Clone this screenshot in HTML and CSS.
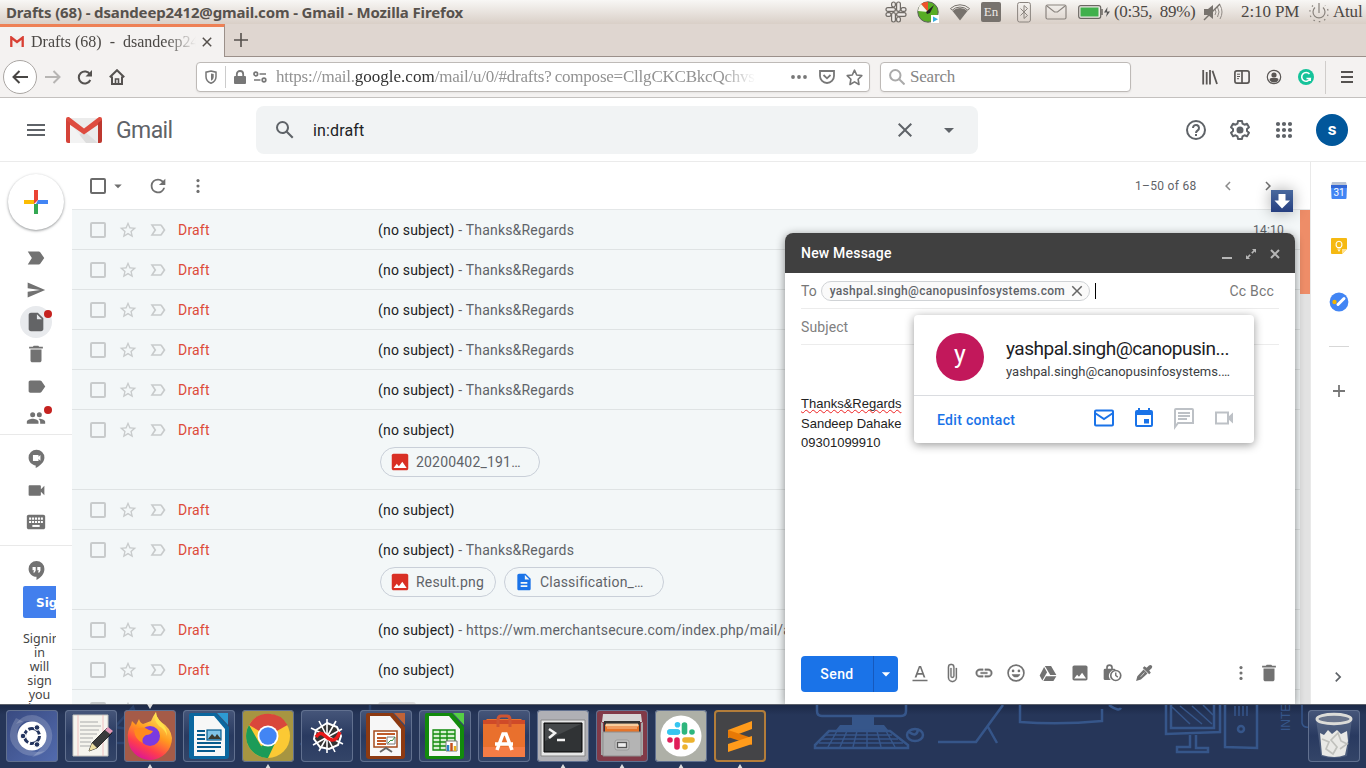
FILE: index.html
```html
<!DOCTYPE html>
<html lang="en">
<head>
<meta charset="utf-8">
<title>Drafts (68) - dsandeep2412@gmail.com - Gmail</title>
<link rel="stylesheet" href="styles.css">
</head>
<body>
<svg class="defs" width="0" height="0" aria-hidden="true">
  <symbol id="menu" viewBox="0 0 24 24"><path d="M3 18h18v-2H3v2zm0-5h18v-2H3v2zm0-7v2h18V6H3z"/></symbol>
  <symbol id="search" viewBox="0 0 24 24"><path d="M20.49 19l-5.73-5.73C15.53 12.2 16 10.91 16 9.5A6.5 6.5 0 1 0 9.5 16c1.41 0 2.7-.47 3.77-1.24L19 20.49 20.49 19zM5 9.5C5 7.01 7.01 5 9.5 5S14 7.01 14 9.5 11.99 14 9.5 14 5 11.99 5 9.5z"/></symbol>
  <symbol id="close" viewBox="0 0 24 24"><path d="M19 6.41L17.59 5 12 10.59 6.41 5 5 6.41 10.59 12 5 17.59 6.41 19 12 13.41 17.59 19 19 17.59 13.41 12z"/></symbol>
  <symbol id="caret" viewBox="0 0 24 24"><path d="M7 10l5 5 5-5z"/></symbol>
  <symbol id="refresh" viewBox="0 0 24 24"><path d="M17.65 6.35A7.96 7.96 0 0 0 12 4a8 8 0 1 0 7.73 10h-2.08A6 6 0 1 1 12 6c1.66 0 3.14.69 4.22 1.78L13 11h7V4l-2.35 2.35z"/></symbol>
  <symbol id="more" viewBox="0 0 24 24"><circle cx="12" cy="5.500" r="1.900"/><circle cx="12" cy="12" r="1.900"/><circle cx="12" cy="18.500" r="1.900"/></symbol>
  <symbol id="left" viewBox="0 0 24 24"><path d="M15.41 7.41L14 6l-6 6 6 6 1.41-1.41L10.83 12z"/></symbol>
  <symbol id="right" viewBox="0 0 24 24"><path d="M10 6L8.590 7.410 13.170 12l-4.580 4.590L10 18l6-6z"/></symbol>
  <symbol id="star" viewBox="0 0 24 24"><path d="M22 9.24l-7.19-.62L12 2 9.19 8.63 2 9.24l5.46 4.73L5.820 21 12 17.270 18.180 21l-1.630-7.030L22 9.240zM12 15.400l-3.760 2.270 1-4.280-3.320-2.880 4.380-.38L12 6.100l1.710 4.040 4.380.38-3.320 2.880 1 4.280L12 15.400z"/></symbol>
  <symbol id="imp-o" viewBox="0 0 24 24"><path d="M15 19H3l4.500-7L3 5h12c.65 0 1.260.31 1.630.84L21 12l-4.370 6.160c-.37.52-.98.84-1.630.84zm-8.500-2H15l3.500-5L15 7H6.500l3.500 5-3.500 5z"/></symbol>
  <symbol id="imp" viewBox="0 0 24 24"><path d="M3 19h12c.65 0 1.260-.31 1.630-.84L21 12l-4.370-6.160A2 2 0 0 0 15 5H3l4.500 7z"/></symbol>
  <symbol id="send" viewBox="0 0 24 24"><path d="M2.010 21L23 12 2.010 3 2 10l15 2-15 2z"/></symbol>
  <symbol id="draft" viewBox="0 0 24 24"><path d="M6 2c-1.100 0-2 .9-2 2v16c0 1.100.9 2 2 2h12c1.100 0 2-.9 2-2V8l-6-6H6zm7 7V3.500L18.500 9H13z"/></symbol>
  <symbol id="trash" viewBox="0 0 24 24"><path d="M6 19c0 1.100.9 2 2 2h8c1.100 0 2-.9 2-2V7H6v12zM19.500 4h-4l-1-1h-5l-1 1h-4v2h15V4z"/></symbol>
  <symbol id="label" viewBox="0 0 24 24"><path d="M17.630 5.840C17.270 5.330 16.670 5 16 5H5c-1.100 0-2 .9-2 2v10c0 1.100.9 2 2 2h11c.67 0 1.270-.33 1.630-.84L22 12l-4.370-6.160z"/></symbol>
  <symbol id="people" viewBox="0 0 24 24"><path d="M16 11a3 3 0 1 0 0-6 3 3 0 0 0 0 6zm-8 0a3 3 0 1 0 0-6 3 3 0 0 0 0 6zm0 2c-2.330 0-7 1.170-7 3.500V19h14v-2.500c0-2.330-4.670-3.500-7-3.500zm8 0c-.29 0-.62.02-.97.05 1.160.84 1.970 1.970 1.970 3.450V19h6v-2.500c0-2.330-4.670-3.500-7-3.500z"/></symbol>
  <symbol id="video" viewBox="0 0 24 24"><path d="M17 10.500V7c0-.55-.45-1-1-1H4c-.55 0-1 .45-1 1v10c0 .55.45 1 1 1h12c.55 0 1-.45 1-1v-3.500l4 4v-11l-4 4z"/></symbol>
  <symbol id="keyboard" viewBox="0 0 24 24"><path d="M20 4H4c-1.100 0-2 .9-2 2v12c0 1.100.9 2 2 2h16c1.100 0 2-.9 2-2V6c0-1.100-.9-2-2-2z"/><path d="M4.500 8.300h15M4.500 12h15" fill="none" stroke="#fff" stroke-width="2.300" stroke-dasharray="2.250 .95"/><path d="M8 16.300h8" stroke="#fff" stroke-width="2.200"/></symbol>
  <symbol id="meet" viewBox="0 0 24 24"><path d="M12 1a10 10 0 0 0-10 10c0 5 4 9 9 9.800V24c5-2.500 11-7.500 11-13A10 10 0 0 0 12 1z"/><path fill="#fff" d="M7.500 7.500h7v2.300L17 7.600v7.300l-2.500-2.200V15h-7z"/></symbol>
  <symbol id="hangouts" viewBox="0 0 24 24"><path d="M12 0a10 10 0 0 0-10 10c0 5.300 4.500 9.800 10 10v4c5.500-3 10-8 10-14A10 10 0 0 0 12 0z"/><path fill="#fff" d="M7 7.500h4V12l-1.300 2.500H7.800L9 11.600H7zm6 0h4V12l-1.300 2.500h-1.900l1.200-2.900h-2z"/></symbol>
  <symbol id="image" viewBox="0 0 24 24"><path d="M21 19V5c0-1.100-.9-2-2-2H5c-1.100 0-2 .9-2 2v14c0 1.100.9 2 2 2h14c1.100 0 2-.9 2-2z"/><path fill="#fff" d="M5 18.500l3.500-4.500 2.300 2.600 3.700-5 4.800 6.900z"/></symbol>
  <symbol id="doc" viewBox="0 0 24 24"><path d="M14 2H6c-1.100 0-2 .9-2 2v16c0 1.100.9 2 2 2h12c1.100 0 2-.9 2-2V8l-6-6zm2 16H8v-2h8v2zm0-4H8v-2h8v2zm-3-5V3.500L18.500 9H13z"/></symbol>
  <symbol id="expand" viewBox="0 0 12 12"><path d="M7 1h4v4L9.600 3.600 7.400 5.800l-1.200-1.200 2.200-2.200zM5 11H1V7l1.400 1.400 2.200-2.200 1.200 1.200-2.200 2.200z"/></symbol>
</svg>

<header class="titlebar">
  <span class="window-title">Drafts (68) - dsandeep2412@gmail.com - Gmail - Mozilla Firefox</span>
  <div class="tray">
    <svg class="t-slack" width="22" height="22" viewBox="0 0 22 22" fill="#efebe8" stroke="#6f6a65" stroke-width="1.200"><rect x="6.600" y="1" width="3.800" height="5" rx="1.900"/><rect x="1" y="6.600" width="9.400" height="3.800" rx="1.900"/><rect x="16" y="6.600" width="5" height="3.800" rx="1.900"/><rect x="11.600" y="1" width="3.800" height="9.400" rx="1.900"/><rect x="11.600" y="16" width="3.800" height="5" rx="1.900"/><rect x="11.600" y="11.600" width="9.400" height="3.800" rx="1.900"/><rect x="1" y="11.600" width="5" height="3.800" rx="1.900"/><rect x="6.600" y="11.600" width="3.800" height="9.400" rx="1.900"/></svg>
    <svg width="22" height="22" viewBox="0 0 22 22"><circle cx="11" cy="11" r="10.200" fill="#58ad25" stroke="#5a5f5a"/><path d="M11 11L4 3a10 10 0 0 1 7-2z" fill="#f0522a"/><path d="M11 11L4 3a10 10 0 0 0-3 7z" fill="#f6f3e8"/><path d="M17 4l-4 8-3 1-1-2z" fill="#222"/><path d="M14 14h8v8h-8z" fill="#fff"/><path d="M16 15.500l5 2.800-5 2.700z" fill="#39aee0"/></svg>
    <svg width="22" height="18" viewBox="0 0 22 18"><path d="M1.500 5.500a14 14 0 0 1 19 0L19 7.300a11.500 11.500 0 0 0-16 0z" fill="none" stroke="#77726d"/><path d="M3.500 8a11 11 0 0 1 15 0L11 17.500z" fill="#77726d"/></svg>
    <span class="lang">En</span>
    <svg width="14" height="22" viewBox="0 0 14 22" fill="none" stroke="#8a847f"><rect x=".6" y="1.500" width="12.800" height="19.500" rx="2"/><path d="M3.500 7.500l7 7L7 17.500v-13l3.500 3-7 7"/></svg>
    <svg width="22" height="16" viewBox="0 0 22 16" fill="none" stroke="#8a847f" stroke-width="1.200"><rect x="1" y="1" width="20" height="14" rx="1.500"/><path d="M2 2l7.500 6h3L20 2"/></svg>
    <svg width="33" height="14" viewBox="0 0 33 14"><rect x=".7" y=".7" width="22" height="12.600" rx="2" fill="#efebe7" stroke="#6b6762" stroke-width="1.200"/><rect x="2.500" y="2.500" width="18" height="9" fill="#40b04c"/><path d="M24 4v6" stroke="#6b6762" stroke-width="1.500"/><path d="M29.500 2L26 7.500h3L28 12l4-5.500h-3z" fill="#555"/></svg>
    <span class="battery">(0:35, &nbsp;89%)</span>
    <svg width="22" height="20" viewBox="0 0 22 20"><path d="M2 7h4l5-4v14l-5-4H2z" fill="#77726d"/><path d="M13 7q2 3 0 6M15.500 5q3 5 0 10M18 3q4 7 0 14" fill="none" stroke="#918b86"/><path d="M2 18L18 2" stroke="#77726d" stroke-width="1.500"/></svg>
    <span class="clock">2:10 PM</span>
    <svg width="20" height="22" viewBox="0 0 20 22" fill="none" stroke="#89837d" stroke-width="1.200"><path d="M10 2v10M6 6.500a6 6 0 1 0 8 0"/><path stroke-dasharray="1.500 4" d="M4 4.500a9.200 9.200 0 1 0 12 0"/></svg>
    <span class="user">Atul</span>
  </div>
</header>

<div class="tabs">
  <div class="tab">
    <svg width="14" height="11" viewBox="0 0 14 11"><path d="M0 0h14v11H0z" fill="#f2efed"/><path d="M1.300 11V1.500L7 6l5.700-4.500V11" fill="none" stroke="#d93f33" stroke-width="2.300"/></svg>
    <span class="tab-title">Drafts (68) &nbsp;- &nbsp;dsandeep24</span>
    <svg class="tab-close" width="10" height="10" viewBox="0 0 10 10" stroke="#55504c" stroke-width="1.500"><path d="M.8.8l8.400 8.400M9.200.8L.8 9.200"/></svg>
  </div>
  <svg class="new-tab" width="14" height="14" viewBox="0 0 14 14" stroke="#55504c" stroke-width="1.600"><path d="M7 0v14M0 7h14"/></svg>
</div>

<nav class="navbar">
  <span class="back"><svg width="16" height="14" viewBox="0 0 16 14" fill="none" stroke="#484644" stroke-width="2"><path d="M16 7H1.500M7.500 1l-6 6 6 6"/></svg></span>
  <svg class="fwd" width="16" height="14" viewBox="0 0 16 14" fill="none" stroke="#b7b5b3" stroke-width="2"><path d="M0 7h14.500M8.500 1l6 6-6 6"/></svg>
  <svg class="reload" width="16" height="15" viewBox="0 0 16 15"><path d="M13 4.500A6 6 0 1 0 13.300 10" fill="none" stroke="#555250" stroke-width="2"/><path d="M15 0v6.500H8.500z" fill="#555250"/></svg>
  <svg class="home" width="16" height="16" viewBox="0 0 16 16" fill="none" stroke="#555250" stroke-width="2"><path d="M.8 8.300L8 1.200l7.200 7.100M3 7.500V15h10V7.500"/><path d="M6.500 15v-5h3v5" stroke-width="1.600"/></svg>
  <div class="urlbar">
    <svg class="shield" width="12" height="14" viewBox="0 0 12 14"><path d="M6 1l5 1.200v4.500C11 10 9 12 6 13.200 3 12 1 10 1 6.700V2.200z" fill="none" stroke="#777" stroke-width="1.500"/><path d="M6 3.500l2.700.6v2.700c0 2-1 3.200-2.700 4z" fill="#777"/></svg>
    <i class="sep"></i>
    <svg width="12" height="14" viewBox="0 0 12 14"><rect y="6" width="12" height="8" rx="1" fill="#777"/><path d="M2.800 7V4.200a3.200 3.200 0 0 1 6.400 0V7" fill="none" stroke="#777" stroke-width="1.800"/></svg>
    <svg class="perm" width="14" height="12" viewBox="0 0 14 12" fill="none" stroke="#777" stroke-width="1.700"><circle cx="2.800" cy="3" r="1.800"/><path d="M6.500 3H13M1 9h6.500"/><circle cx="11" cy="9" r="1.800"/></svg>
    <span class="url">https://mail.<b>google.com</b>/mail/u/0/#drafts?&thinsp;compose=CllgCKCBkcQchvsk</span>
    <svg class="dots" width="16" height="4" viewBox="0 0 16 4" fill="#777"><circle cx="2" cy="2" r="1.900"/><circle cx="8" cy="2" r="1.900"/><circle cx="14" cy="2" r="1.900"/></svg>
    <svg class="pocket" width="16" height="14" viewBox="0 0 16 14" fill="none" stroke="#777" stroke-width="1.800"><path d="M1 1h14v5a7 7 0 0 1-14 0zM4.500 5L8 8.300 11.500 5"/></svg>
    <svg class="fav" width="17" height="17" viewBox="0 0 17 17" fill="none" stroke="#777" stroke-width="1.600" stroke-linejoin="round"><path d="M8.500 1.200l2.200 4.800 5.100.6-3.700 3.600.9 5.300-4.500-2.600L4 15.500l.9-5.300L1.200 6.600 6.300 6z"/></svg>
  </div>
  <div class="searchbar">
    <svg width="16" height="16" viewBox="0 0 16 16" fill="none" stroke="#aaa" stroke-width="2"><circle cx="6.300" cy="6.300" r="5.200"/><path d="M10 10l5.500 5.500"/></svg>
    <span>Search</span>
  </div>
  <div class="nav-tools">
    <svg width="16" height="15" viewBox="0 0 16 15" stroke="#5a5755" stroke-width="1.800"><path d="M1.200 0v14.500M4.700 2v12.500M8 0v14.500M10.500.8L15 14"/></svg>
    <svg width="16" height="14" viewBox="0 0 16 14" fill="none" stroke="#5a5755" stroke-width="1.700"><rect x=".9" y=".9" width="14.200" height="12.200" rx="2"/><path d="M8 1v12"/><path d="M3 4.200h3M3 6.500h3M3 8.700h2" stroke-width="1"/></svg>
    <svg width="16" height="16" viewBox="0 0 16 16"><circle cx="8" cy="8" r="6.700" fill="none" stroke="#5a5755" stroke-width="1.200"/><circle cx="8" cy="6" r="2.600" fill="#5a5755"/><path d="M3.500 11q0-2 2-2h5q2 0 2 2-1.500 2.500-4.500 2.500T3.500 11z" fill="#5a5755"/></svg>
    <svg width="16" height="16" viewBox="0 0 16 16"><circle cx="8" cy="8" r="8" fill="#15c39a"/><path d="M11.500 5A4.400 4.400 0 1 0 12.200 9.500H8.500M12.200 9.500V12" fill="none" stroke="#fff" stroke-width="1.600"/></svg>
  </div>
  <svg class="burger" width="12" height="12" viewBox="0 0 12 12" stroke="#555250" stroke-width="1.800"><path d="M0 1h12M0 6h12M0 11h12"/></svg>
</nav>

<div class="app">
  <header class="gm-head">
    <svg class="ic g-menu" width="24" height="24"><use href="#menu"/></svg>
    <svg class="g-logo" width="36" height="26" viewBox="0 0 36 26"><path d="M2 1h32v25H2z" fill="#ececec"/><path d="M4 26L18 14l14 12z" fill="#dedede"/><path d="M4 26V6l16 20z" fill="#f3f3f3"/><path d="M0 2a2 2 0 0 1 2-2h1l15 11.500L33 0h1a2 2 0 0 1 2 2v3L18 17.500 0 5z" fill="#de4c40"/><path d="M0 3l4 3v20H2a2 2 0 0 1-2-2z" fill="#d54339"/><path d="M36 3l-4 3v20h2a2 2 0 0 0 2-2z" fill="#bd382f"/></svg>
    <span class="g-name">Gmail</span>
    <div class="g-search">
      <svg class="ic" width="24" height="24"><use href="#search"/></svg>
      <span class="q">in:draft</span>
      <svg class="ic" width="24" height="24"><use href="#close"/></svg>
      <svg class="ic q-caret" width="24" height="24"><use href="#caret"/></svg>
    </div>
    <div class="g-right">
      <svg width="24" height="24" viewBox="0 0 24 24" fill="none" stroke="#5f6368" stroke-width="2"><circle cx="12" cy="12" r="9"/><path d="M9 10a3 3 0 1 1 4.700 2.400C12.700 13.100 12 13.600 12 15M12 16v2"/></svg>
      <svg width="24" height="24" viewBox="0 0 24 24" fill="none" stroke="#5f6368" stroke-width="2" stroke-linejoin="round"><path d="M10 3h4l.5 2.600 2 1.100 2.500-.9 2 3.400-2 1.700v2.200l2 1.700-2 3.400-2.500-.9-2 1.100L14 21h-4l-.5-2.600-2-1.100-2.500.9-2-3.400 2-1.700v-2.200L3 9.200l2-3.400 2.500.9 2-1.100z"/><circle cx="12" cy="12" r="2.500" fill="#5f6368"/></svg>
      <svg width="24" height="24" viewBox="0 0 24 24" fill="none" stroke="#5f6368" stroke-width="4.200" stroke-linecap="round"><path d="M6 6h0M12 6h0M18 6h0M6 12h0M12 12h0M18 12h0M6 18h0M12 18h0M18 18h0"/></svg>
      <span class="avatar">s</span>
    </div>
  </header>

  <div class="gm-body">
    <aside class="rail">
      <div class="compose-btn"><svg width="24" height="24" viewBox="0 0 24 24"><path d="M10 0h4v10l-4 4z" fill="#ea4335"/><path d="M0 10h10v4H0z" fill="#fbbc04"/><path d="M14 10h10v4H12z" fill="#4285f4"/><path d="M10 14h4v10h-4z" fill="#34a853"/></svg></div>
      <div class="r-item"><svg width="22" height="22"><use href="#imp"/></svg></div>
      <div class="r-item"><svg width="20" height="20"><use href="#send"/></svg></div>
      <div class="r-item on"><svg width="22" height="22"><use href="#draft"/></svg><i class="dot"></i></div>
      <div class="r-item"><svg width="22" height="22"><use href="#trash"/></svg></div>
      <div class="r-item r-label"><svg width="21" height="21"><use href="#label"/></svg></div>
      <div class="r-item"><svg width="20" height="20"><use href="#people"/></svg><i class="dot"></i></div>
      <div class="r-item r-top"><svg width="19" height="19"><use href="#meet"/></svg></div>
      <div class="r-item"><svg width="21" height="21"><use href="#video"/></svg></div>
      <div class="r-item"><svg width="22" height="22"><use href="#keyboard"/></svg></div>
      <div class="r-item r-hang"><svg width="19" height="19"><use href="#hangouts"/></svg></div>
      <div class="signin"><div class="sig-btn">Sign in</div><p>Signing in will sign you into</p></div>
    </aside>

    <main class="mail">
      <div class="m-bar">
        <i class="box dark"></i>
        <svg class="b-caret" width="18" height="18"><use href="#caret"/></svg>
        <svg class="b-ref" width="22" height="22"><use href="#refresh"/></svg>
        <svg class="b-more" width="20" height="20"><use href="#more"/></svg>
        <span class="count">1–50 of 68</span>
        <svg class="b-left" width="18" height="18"><use href="#left"/></svg>
        <svg class="b-right" width="18" height="18"><use href="#right"/></svg>
      </div>
      <div class="rows">
        <div class="list">
          <div class="row"><i class="box"></i><svg><use href="#star"/></svg><svg><use href="#imp-o"/></svg><span class="from">Draft</span><span class="subj">(no subject) <em>- Thanks&amp;Regards</em></span><time>14:10</time></div>
          <div class="row"><i class="box"></i><svg><use href="#star"/></svg><svg><use href="#imp-o"/></svg><span class="from">Draft</span><span class="subj">(no subject) <em>- Thanks&amp;Regards</em></span></div>
          <div class="row"><i class="box"></i><svg><use href="#star"/></svg><svg><use href="#imp-o"/></svg><span class="from">Draft</span><span class="subj">(no subject) <em>- Thanks&amp;Regards</em></span></div>
          <div class="row"><i class="box"></i><svg><use href="#star"/></svg><svg><use href="#imp-o"/></svg><span class="from">Draft</span><span class="subj">(no subject) <em>- Thanks&amp;Regards</em></span></div>
          <div class="row"><i class="box"></i><svg><use href="#star"/></svg><svg><use href="#imp-o"/></svg><span class="from">Draft</span><span class="subj">(no subject) <em>- Thanks&amp;Regards</em></span></div>
          <div class="row tall"><i class="box"></i><svg><use href="#star"/></svg><svg><use href="#imp-o"/></svg><span class="from">Draft</span><div class="subj">(no subject)
            <div class="files"><span class="chip w160"><svg class="f-img"><use href="#image"/></svg>20200402_191…</span></div></div></div>
          <div class="row"><i class="box"></i><svg><use href="#star"/></svg><svg><use href="#imp-o"/></svg><span class="from">Draft</span><span class="subj">(no subject)</span></div>
          <div class="row tall"><i class="box"></i><svg><use href="#star"/></svg><svg><use href="#imp-o"/></svg><span class="from">Draft</span><div class="subj">(no subject) <em>- Thanks&amp;Regards</em>
            <div class="files"><span class="chip w116"><svg class="f-img"><use href="#image"/></svg>Result.png</span><span class="chip w160"><svg class="f-doc"><use href="#doc"/></svg>Classification_…</span></div></div></div>
          <div class="row"><i class="box"></i><svg><use href="#star"/></svg><svg><use href="#imp-o"/></svg><span class="from">Draft</span><span class="subj">(no subject) <em>- https://wm.merchantsecure.com/index.php/mail/a</em></span></div>
          <div class="row"><i class="box"></i><svg><use href="#star"/></svg><svg><use href="#imp-o"/></svg><span class="from">Draft</span><span class="subj">(no subject)</span></div>
          <div class="row"><i class="box"></i><svg><use href="#star"/></svg><svg><use href="#imp-o"/></svg><i class="tag"></i></div>
        </div>
        <div class="scroll"><i></i></div>
      </div>
    </main>

    <aside class="panel">
      <svg class="p-cal" width="16" height="17" viewBox="0 0 16 17"><path d="M1 0h14l1 4H0z" fill="#b9c3d3"/><path d="M0 3h16l-.5 13q0 1-1 1h-13q-1 0-1-1z" fill="#4285f4"/><path d="M0 3h16v3H0z" fill="#3367d6"/><text x="8" y="13.500" text-anchor="middle" class="cal-num">31</text></svg>
      <svg class="p-keep" width="16" height="16" viewBox="0 0 16 16"><path d="M1 0h14q1 0 1 1v10l-5 5H1q-1 0-1-1V1q0-1 1-1z" fill="#f5b912"/><path d="M11 16v-5h5z" fill="#fde293"/><path d="M6.300 9.500C4 7 5 3.200 8 3.200s4 3.800 1.700 6.300zM6.500 11h3M7 12.800h2" fill="none" stroke="#fff" stroke-width="1.100"/></svg>
      <svg class="p-task" width="20" height="20" viewBox="0 0 20 20"><circle cx="10" cy="10" r="9.400" fill="#4285f4"/><circle cx="5.500" cy="10" r="2.200" fill="#f4b400"/><path d="M9 12.500l6-6" stroke="#fff" stroke-width="3" stroke-linecap="round"/></svg>
      <i class="p-line"></i>
      <svg class="p-plus" width="12" height="12" viewBox="0 0 12 12" stroke="#777" stroke-width="1.800"><path d="M6 0v12M0 6h12"/></svg>
      <svg class="p-next" width="20" height="20"><use href="#right"/></svg>
    </aside>
  </div>

  <span class="dl"><svg width="22" height="22" viewBox="0 0 22 22"><path d="M7.500 4h7v6.500H19L11 18.500 3.500 10.500h4z" fill="#fff"/></svg></span>

  <section class="compose">
    <header><span>New Message</span><i class="min"></i><svg class="c-exp" width="12" height="12"><use href="#expand"/></svg><svg class="c-x" width="10" height="10" viewBox="0 0 10 10"><path d="M1 1l8 8M9 1L1 9"/></svg></header>
    <div class="to"><span>To</span><span class="recip">yashpal.singh@canopusinfosystems.com<svg width="18" height="18"><use href="#close"/></svg></span><i class="cursor"></i><span class="cc">Cc Bcc</span></div>
    <div class="subject">Subject</div>
    <div class="text"><u>Thanks&amp;Regards</u><br>Sandeep Dahake<br>09301099910</div>
    <footer>
      <div class="send"><span>Send</span><svg width="20" height="20"><use href="#caret"/></svg></div>
      <div class="tools">
        <svg viewBox="0 0 24 24"><path d="M3 20h18v2H3zM5.500 17.500l5.200-14h2.600l5.200 14h-2.200l-1.200-3.500H9l-1.200 3.500zM9.600 12h4.800L12 5.300z"/></svg>
        <svg viewBox="0 0 24 24"><path d="M16.500 6v11.500a4 4 0 0 1-8 0V5a2.500 2.500 0 0 1 5 0v10.500a1 1 0 0 1-2 0V6H10v9.500a2.500 2.500 0 0 0 5 0V5a4 4 0 0 0-8 0v12.500a5.500 5.500 0 0 0 11 0V6h-1.500z" stroke="#727272" stroke-width=".3"/></svg>
        <svg viewBox="0 0 24 24"><path d="M3.900 12A3.100 3.100 0 0 1 7 8.900h4V7H7a5 5 0 0 0 0 10h4v-1.900H7A3.100 3.100 0 0 1 3.900 12zM8 13h8v-2H8v2zm9-6h-4v1.900h4a3.100 3.100 0 0 1 0 6.200h-4V17h4a5 5 0 0 0 0-10z" stroke="#727272" stroke-width=".4"/></svg>
        <svg viewBox="0 0 24 24"><circle cx="12" cy="12" r="9.500" fill="none" stroke="#727272" stroke-width="2"/><circle cx="8.500" cy="9.500" r="1.600"/><circle cx="15.500" cy="9.500" r="1.600"/><path d="M6.800 13.500h10.400a5.500 5.500 0 0 1-10.400 0z"/></svg>
        <svg viewBox="0 0 24 24"><path d="M8.200 3.500h7.500l6.300 11h-7.300zM7.300 4.800l3.600 6.300L5.200 21 2 15zM9.600 16H22l-3.500 5.500H6.400z"/></svg>
        <svg viewBox="0 0 24 24"><use href="#image"/></svg>
        <svg viewBox="0 0 24 24"><path d="M10.500 20.500H3.700Q2 20.500 2 19V8.700Q2 7 3.700 7H5V5.500a4 4 0 0 1 8 0V7h1.500q1.500 0 1.700 1.500A7 7 0 0 0 10.500 20.500zM7 7h4V5.500a2 2 0 0 0-4 0z"/><circle cx="16.500" cy="15" r="6" fill="#fff" stroke="#727272" stroke-width="2"/><path d="M16.500 11.500V15l2.500 2" fill="none" stroke="#727272" stroke-width="1.700"/></svg>
        <svg viewBox="0 0 24 24"><path d="M2.500 21.500L4 15.800l7.500-8 4.700 4.700-7.900 7.300zM10.500 6l2-2 2.700 1.800L18 3q1.700-1.400 3.200 0t0 3.200L18.300 9l1.900 2.600-2 2z"/><path d="M8 16.500l4.500-5" stroke="#fff" stroke-width=".8"/></svg>
      </div>
      <svg class="f-more" width="20" height="20"><use href="#more"/></svg>
      <svg class="f-trash" width="22" height="22"><use href="#trash"/></svg>
    </footer>
  </section>

  <section class="card">
    <div class="who"><span class="face">y</span><div><h3>yashpal.singh@canopusin...</h3><p>yashpal.singh@canopusinfosystems.…</p></div></div>
    <div class="acts"><span>Edit contact</span>
      <svg viewBox="0 0 24 24" fill="none" stroke="#1a73e8" stroke-width="2"><rect x="3" y="4.500" width="18" height="15" rx="1"/><path d="M3 7l9 6 9-6"/></svg>
      <svg viewBox="0 0 24 24" fill="#1a73e8"><path d="M5 4h1V2h2v2h8V2h2v2h1q2 0 2 2v13q0 2-2 2H5q-2 0-2-2V6q0-2 2-2zm0 5v10h14V9z" fill-rule="evenodd"/><path d="M12 13h5v4.500h-5z"/></svg>
      <svg viewBox="0 0 24 24" fill="none" stroke="#bdc1c6" stroke-width="2"><path d="M3 21V4q0-1 1-1h16q1 0 1 1v13H6zM6 7h12M6 10h12M6 13h9"/></svg>
      <svg viewBox="0 0 24 24"><rect x="4" y="6.500" width="12" height="11" fill="none" stroke="#bdc1c6" stroke-width="2"/><path d="M16 11l5-4.500v11L16 13z" fill="#bdc1c6"/></svg>
    </div>
  </section>
</div>

<footer class="dock">
  <svg class="wall" width="1366" height="64" viewBox="0 0 1366 64" fill="none" stroke="#36568a" stroke-width="2.500">
    <path d="M817 0v6q0 5 5 5h79q5 0 5-5V0" /><path d="M852 12h22v8h10l4 5h-52l4-5h12z" fill="#36568a" stroke="none"/>
    <path d="M829 26h61l18 14v3h-93v-3z"/><path d="M826 30h66M822 34h76M819 38h84M837 26l-9 16M847 26l-7 16M857 26l-4 16M867 26v16M877 26l4 16M886 26l9 16" stroke-width="1.500"/>
    <ellipse cx="915" cy="30" rx="8" ry="6"/><path d="M909 27q8 6 9-3"/>
    <path d="M938 37h38l27-37M988 22l9 16M1020 0v17q40 3 82-1V4M1109 0q10 7 12 3"/>
    <path d="M1166 0v29l54-2V0M1171 0v23h43V0M1190 30v12h-13v5h31v-4h-12V30M1225 0v42l32 1V0"/><circle cx="1241" cy="24" r="3"/>
    <path d="M1172 2l18 17M1180 1l22 18M1192 1l20 18M1203 0l10 10M1235 1v10M1239 1v10M1243 1v10M1247 1v10" stroke-width="1.500"/>
    <path d="M1302 0v18q1 5 7 4" stroke-width="1.500"/><path d="M115 22l18-20 8 24zM104 38h38M310 28q10-20 20 0-2 8-20 0M300 39h50M480 5v30M370 0v11h35" opacity=".45"/>
    <text class="inter" transform="translate(1290 26) rotate(-90)">INTER</text>
  </svg>
  <div class="apps">
    <span class="app-i ub"><svg viewBox="0 0 52 52"><path d="M26 5a21 21 0 0 1 20 24q-3 15-20 18 18-14 10-30Q26 7 10 14q6-9 16-9z" fill="#fff" opacity=".18"/><path d="M10 8q-14 22 4 34 12 8 25-1-18 4-25-9T18 12z" fill="#fff" opacity=".18"/><circle cx="26" cy="26" r="14.500" fill="#fff"/><circle cx="26" cy="26" r="7.500" fill="none" stroke="#23345e" stroke-width="3" stroke-dasharray="13.700 2"/><g fill="#23345e" stroke="#fff"><circle cx="17" cy="26" r="2.800"/><circle cx="31" cy="17.500" r="2.800"/><circle cx="31" cy="34.500" r="2.800"/></g></svg></span>
    <span class="app-i"><svg viewBox="0 0 52 52"><path d="M8 5h35v41H8z" fill="#f5f4ee" stroke="#c3c3bf"/><path d="M13 5v41M38 5v41" stroke="#efb4b4" stroke-width=".8"/><path d="M15 12h18M15 16h21M15 20h19M15 24h17M15 28h13M15 32h11M15 36h10" stroke="#aaa" stroke-width="1.200"/><path d="M24 41l3-8L42 18l5 5-15 15z" fill="#3a3b3b" stroke="#111" stroke-width=".8"/><path d="M24 41l3-8 5 5z" fill="#eee0a3"/><path d="M40 20l3-3 5 4-3 3z" fill="#e297b7"/></svg></span>
    <span class="app-i ff run"><svg viewBox="0 0 52 52"><defs><linearGradient id="fg" x1=".8" y1="0" x2=".3" y2="1"><stop stop-color="#fff36b"/><stop offset=".45" stop-color="#ff9a1f"/><stop offset=".75" stop-color="#ff3d4d"/><stop offset="1" stop-color="#d9139c"/></linearGradient></defs><path d="M32 2q0 5 5 10 10 6 11 16A22 22 0 0 1 4 28q-1-7 3-13l1-4 4 4 3-6q1 4 4 5l8-3q2-5 5-9z" fill="url(#fg)"/><circle cx="26" cy="26" r="10" fill="#7a3ae0"/><path d="M10 20q9-5 15 0l4 1q-2 4-7 4-5 3-3 8-8-3-9-13z" fill="#ff8a1c"/><path d="M32 2q0 5 5 10 6 6 6 14-2-7-8-10-6-6-3-14z" fill="#ffe14a"/></svg></span>
    <span class="app-i wr"><svg viewBox="0 0 52 52"><path d="M8 3h25L46 17v29q0 3-3 3H9q-3 0-3-3V5q0-2 2-2z" fill="#0b679f"/><path d="M34 3h11v12z" fill="#2e9ad2"/><path d="M11 6h20l11 13v27H11z" fill="#f7f7f7"/><path d="M14 21h8M14 25h8M14 29h8M14 33h24M14 37h24M14 41h18" stroke="#085b8d" stroke-width="2"/><rect x="24" y="20" width="14" height="10" fill="#7ec3e6" stroke="#085b8d" stroke-width="1.200"/><path d="M25 29l4-5 3 3 2-3 4 5z" fill="#3a3b2f"/></svg></span>
    <span class="app-i ch run"><svg viewBox="0 0 52 52"><circle cx="26" cy="26" r="22" fill="#fbc934"/><path d="M26 26L7 15a22 22 0 0 1 38.500 0z" fill="#d9473c"/><path d="M7 15l12 21 7 12A22 22 0 0 1 7 15z" fill="#1b9b58"/><path d="M34 31L26 48h-2L19 36z" fill="#1b9b58"/><circle cx="26" cy="26" r="10.500" fill="#fff"/><circle cx="26" cy="26" r="8.700" fill="#4285f4"/></svg></span>
    <span class="app-i"><svg viewBox="0 0 52 52"><path d="M26 13l10 4 4 9-3 9-9 4-9-2-6-8 2-9z" fill="#333"/><g stroke="#fff" fill="none" stroke-width="1.600"><path d="M26 9v34M10 18l32 16M12 35l29-16M18 11l16 31M35 11L18 41"/><path d="M26 13l10 4 4 9-3 9-9 4-9-2-6-8 2-9z" stroke-width="2"/></g><path d="M15 27q4-6 8-2t8 5 8-8" fill="none" stroke="#ea1919" stroke-width="3.500"/></svg></span>
    <span class="app-i"><svg viewBox="0 0 52 52"><path d="M8 3h25L45 17v29q0 3-3 3H9q-3 0-3-3V5q0-2 2-2z" fill="#8d3a12"/><path d="M34 3h11v12z" fill="#bf6338"/><path d="M10 6h20l11 13v27H10z" fill="#f7f7f7"/><rect x="14" y="21" width="23" height="16" fill="#fff" stroke="#a54a1b" stroke-width="1.500"/><path d="M17 24h18M17 28h9M17 31h9M17 34h9" stroke="#bf5a2a" stroke-width="1.800"/><path d="M27 27h8v7h-8z" fill="#fff" stroke="#777"/><path d="M28 33l3-3 1 1 3-4" stroke="#3c9440" fill="none"/><path d="M20 42l6-4 6 4" fill="none" stroke="#666" stroke-width="2"/></svg></span>
    <span class="app-i"><svg viewBox="0 0 52 52"><path d="M8 3h25L45 17v29q0 3-3 3H9q-3 0-3-3V5q0-2 2-2z" fill="#128a0c"/><path d="M34 3h11v12z" fill="#55cf45"/><path d="M10 6h20l11 13v27H10z" fill="#f7f7f7"/><path d="M14 20h22v20H14zM14 24h22M14 28h22M14 32h22M14 36h22M21 20v20M28 20v20" fill="#d7f0d1" stroke="#128a0c" stroke-width="1.300"/><path d="M27 31h11v10H27z" fill="#fff" stroke="#777"/><path d="M29 35v6" stroke="#2b83c5" stroke-width="2.500"/><path d="M32.500 33v8" stroke="#c35322" stroke-width="2.500"/><path d="M36 36v5" stroke="#e9b21c" stroke-width="2.500"/></svg></span>
    <span class="app-i"><svg viewBox="0 0 52 52"><path d="M5 13l4-4h34l4 4v34H5z" fill="#e9702d"/><path d="M5 10h42v4H5z" fill="#cf4a28"/><path d="M5 37h42v10H5z" fill="#f57c45"/><path d="M20 17V10q0-4 3-4h6q3 0 3 4v7" fill="none" stroke="#ce5432" stroke-width="3"/><path d="M19 40l6-16h3l6 16M17 34h18" fill="none" stroke="#fff" stroke-width="3.500"/></svg></span>
    <span class="app-i te run"><svg viewBox="0 0 52 52"><path d="M4 10h44v36H4z" fill="#e6e6e6" stroke="#888"/><path d="M7 13h38v29H7z" fill="#303335" stroke="#050505"/><path d="M8 14h36L8 31z" fill="#45484a"/><path d="M12 19l6 4-6 5M20 30h8" fill="none" stroke="#f3f3f3" stroke-width="2.500"/></svg></span>
    <span class="app-i fi run"><svg viewBox="0 0 52 52"><path d="M7 4h38l1 8H6z" fill="#d6d6d6"/><path d="M8 11h36v12H8z" fill="#333"/><path d="M9 15h34v8H9z" fill="#e5742a"/><path d="M10 14h32v2H10zM11 18h30" fill="#f6c58e" stroke="#fbdab4" stroke-width=".8"/><path d="M5 12v33h42V12l-2 1v9H7v-9z" fill="#aaa"/><path d="M7 22h38v24H7z" fill="#b4b4b4" stroke="#8e8e8e"/><rect x="19" y="30" width="14" height="10" rx="2" fill="#c8c8c8" stroke="#999"/><rect x="21.500" y="32.500" width="9" height="5" fill="#eee" stroke="#555" stroke-width="1.300"/></svg></span>
    <span class="app-i sl run"><svg viewBox="0 0 52 52"><circle cx="26" cy="26" r="20.500" fill="#fff"/><g stroke-width="5.600" stroke-linecap="round"><path d="M15 22h7" stroke="#36c5f0"/><path d="M22.500 14.800h0M15 22h7.500" stroke="#36c5f0"/><path d="M29.500 15v7M37 22h0" stroke="#2eb67d"/><path d="M22 30v7M15 30h0" stroke="#e01e5a"/><path d="M30 30h7M30 37h0" stroke="#ecb22e"/></g></svg></span>
    <span class="app-i su run"><svg viewBox="0 0 52 52"><path d="M14 20l24-9v8l-24 9z" fill="#ff9b1b"/><path d="M14 20l24 8v7l-24-8z" fill="#e87905"/><path d="M14 34l24-8v8l-24 8z" fill="#ff9b1b"/></svg></span>
    <span class="app-i bin"><svg viewBox="0 0 52 52"><path d="M8 9h36l-5 37q-13 4-26 0z" fill="#8090a5" opacity=".35"/><path d="M12 23l4 2 4-5 4 4 5-4 4 4 6-3 1 10-3 14q-10 4-23 0z" fill="#e9e9e6"/><path d="M14 29l7 3-3 7 7 5 4-7-6-7 7-7 3 8 6 3-7 5" fill="none" stroke="#c0c1bd" stroke-width="1.700"/><ellipse cx="26" cy="9" rx="17" ry="4.800" fill="#69748b" stroke="#dcdcd8" stroke-width="3"/></svg></span>
  </div>
</footer>
</body>
</html>
```
FILE: styles.css
```css
* { box-sizing: border-box; }
body { margin: 0; width: 1366px; height: 768px; overflow: hidden; display: flex; flex-direction: column; background: #fff; font-family: Roboto, sans-serif; color: #202124; }
.defs { position: absolute; }
svg { flex: none; display: block; }
i { font-style: normal; flex: none; }

/* Desktop top bar */
.titlebar { height: 24px; flex: none; display: flex; align-items: center; background: linear-gradient(#f8f7f5, #d9cfc7); padding-left: 6px; }
.window-title { flex: none; font: bold 15px/24px "Noto Sans", sans-serif; color: #57524d; white-space: nowrap; width: 480px; letter-spacing: -.14px; margin-top: -1px; }
.tray { flex: none; display: flex; align-items: center; margin-left: 399px; font: 17px/24px "Liberation Serif", serif; color: #4c4743; white-space: nowrap; }
.tray > * { flex: none; margin-right: 10px; }
.lang { width: 20px; height: 20px; background: #77726d; color: #eeeae6; font: 13px/20px "Liberation Serif", serif; text-align: center; border-radius: 2px; }
.tray .lang { margin-right: 16px; }
.tray svg:nth-of-type(4) { margin-right: 14px; }
.tray svg:nth-of-type(5) { margin-right: 11px; }
.tray svg:nth-of-type(6) { margin-right: 3px; }
.tray .battery { width: 80px; margin-right: 8px; letter-spacing: -.35px; }
.clock { width: 58px; margin-left: 7px; letter-spacing: -.1px; }
.tray svg:nth-of-type(8) { margin-right: 4px; }
.tray .user { margin-right: 0; letter-spacing: -.2px; }

/* Browser chrome */
.tabs { height: 33px; flex: none; display: flex; background: #dfd6d0; border-bottom: 1px solid #9b908a; }
.tab { width: 225px; height: 33px; background: #f4f2f1; border-top: 3px solid #ee8055; border-right: 1px solid #9b908a; display: flex; align-items: center; padding: 0 0 1px 10px; }
.tab-title { width: 166px; margin-left: 7px; overflow: hidden; white-space: nowrap; font: 16px/24px "Liberation Serif", serif; color: #4b4845; letter-spacing: 0; -webkit-mask: linear-gradient(90deg, #000 135px, transparent 165px); }
.tab-close { margin-left: 5px; }
.new-tab { margin: 9px 0 0 9px; }
.navbar { height: 41px; flex: none; background: #f4f2f1; border-bottom: 1px solid #c4c1bf; display: flex; align-items: center; padding-left: 3px; }
.back { width: 34px; height: 34px; border: 1px solid #aaa6a3; border-radius: 50%; background: #fff; display: flex; align-items: center; justify-content: center; }
.fwd { margin-left: 8px; }
.reload { margin-left: 16px; }
.home { margin-left: 16px; }
.urlbar, .searchbar { height: 30px; border: 1px solid #bebab7; border-radius: 4px; background: #fff; display: flex; align-items: center; box-shadow: 0 1px 2px #0001; font: 17px/28px "Liberation Serif", serif; }
.urlbar { width: 674px; margin-left: 71px; padding-left: 8px; }
.sep { width: 1px; height: 22px; background: #ccc; margin: 0 8px; }
.perm { margin-left: 7px; }
.url { width: 480px; margin-left: 9px; overflow: hidden; white-space: nowrap; color: #929292; letter-spacing: -.22px; -webkit-mask: linear-gradient(90deg, #000 445px, transparent 480px); }
.url b { color: #333; font-weight: 400; letter-spacing: 0; }
.dots { margin-left: 35px; }
.pocket { margin-left: 12px; }
.fav { margin-left: 11px; }
.searchbar { width: 251px; margin-left: 10px; padding-left: 8px; color: #858585; letter-spacing: -.2px; }
.searchbar span { margin-left: 5px; }
.nav-tools { display: flex; align-items: center; gap: 16px; margin-left: 71px; padding-right: 11px; height: 33px; border-right: 1px solid #d0cdcb; }
.burger { margin-left: 15px; }

/* Gmail header */
.app { height: 606px; flex: none; display: flex; flex-direction: column; position: relative; overflow: hidden; }
.gm-head { height: 64px; flex: none; border-bottom: 1px solid #ebebeb; display: flex; align-items: center; padding-left: 24px; }
.ic { fill: #5f6368; }
.g-logo { margin-left: 18px; }
.g-name { margin-left: 14px; padding-top: 2px; width: 140px; font: 23px/32px Roboto, sans-serif; color: #5f6368; letter-spacing: -.6px; }
.g-search { width: 722px; height: 48px; background: #f1f3f4; border-radius: 8px; display: flex; align-items: center; padding-left: 17px; }
.q { font-size: 16px; width: 596px; padding: 1px 0 0 16px; letter-spacing: .15px; }
.q-caret { margin-left: 20px; }
.g-right { display: flex; align-items: center; gap: 20px; margin-left: 206px; }
.avatar { width: 32px; height: 32px; border-radius: 50%; background: #01579b; color: #fff; font: 700 17px/30px Roboto, sans-serif; text-align: center; }
.gm-body { display: flex; height: 542px; }

/* Left rail */
.rail { width: 72px; flex: none; display: flex; flex-direction: column; align-items: center; fill: #727272; }
.compose-btn { width: 56px; height: 56px; margin: 12px 0; border-radius: 50%; display: flex; align-items: center; justify-content: center; box-shadow: 0 1px 3px #3c404366, 0 1px 2px #3c404330; flex: none; }
.r-item { width: 72px; height: 32px; flex: none; display: flex; align-items: center; justify-content: center; position: relative; }
.on svg { background: #e8eaed; box-sizing: content-box; padding: 5px; border-radius: 50%; fill: #636466; }
.r-label { padding-left: 1px; }
.dot { position: absolute; left: 44px; top: 4px; width: 8px; height: 8px; border-radius: 50%; background: #c5221f; }
.r-top { height: 40px; padding-top: 7px; border-top: 1px solid #e9e9e9; }
.r-hang { height: 41px; margin-top: 7px; padding-top: 8px; border-top: 1px solid #e9e9e9; }
.signin { width: 33px; margin-left: 7px; overflow: hidden; }
.sig-btn { width: 80px; height: 32px; padding: 1px 0 0 13px; border-radius: 2px; background: #427fed; color: #fff; font: bold 12px/32px "DejaVu Sans", sans-serif; }
.signin p { margin: 14px 0 0; color: #444; text-align: center; font: 12.500px/14px "Noto Sans", sans-serif; }

/* Mail list */
.mail { width: 1238px; flex: none; display: flex; flex-direction: column; }
.m-bar { height: 48px; flex: none; border-bottom: 1px solid #e4e7e8; display: flex; align-items: center; padding-left: 18px; fill: #6f6f6f; }
.box { width: 16px; height: 16px; border: 2px solid #c8cbcc; border-radius: 2px; }
.dark { border-color: #6b6b6b; }
.b-caret { margin-left: 3px; }
.b-ref { margin-left: 20px; }
.b-more { margin-left: 19px; }
.count { margin-left: 927px; width: 62px; font-size: 12px; letter-spacing: .3px; color: #5f6368; white-space: nowrap; }
.b-left { margin-left: 22px; opacity: .8; }
.b-right { margin-left: 22px; }
.rows { display: flex; height: 494px; overflow: hidden; }
.list { width: 1228px; background: #f3f7f8; }
.row { height: 40px; border-bottom: 1px solid #dfe3e4; padding: 12px 0 0 18px; display: flex; align-items: flex-start; font-size: 14px; line-height: 16px; white-space: nowrap; }
.row > svg { width: 20px; height: 20px; margin: -2px 0 0 12px; fill: #c8cbcc; }
.row > svg + svg { margin-left: 10px; }
.from { width: 200px; margin-left: 10px; color: #dd4b39; letter-spacing: .2px; }
.subj { width: 870px; letter-spacing: .19px; }
.subj em { font-style: normal; color: #5f6368; }
time { font-size: 12px; margin-left: 5px; color: #5f6368; letter-spacing: .2px; }
.tall { height: 80px; }
.tag { width: 38px; height: 16px; background: #ddd; border-radius: 3px; margin-left: 210px; }
.files { display: flex; gap: 8px; margin: 9px 0 0 2px; }
.chip { height: 30px; border: 1px solid #c9cfd8; border-radius: 15px; color: #5f6368; display: flex; align-items: center; padding-left: 8px; }
.chip svg { width: 22px; height: 22px; margin-right: 5px; }
.chip .f-doc { width: 20px; height: 20px; margin: 0 6px 0 1px; }
.w160 { width: 160px; }
.w116 { width: 116px; }
.f-img { fill: #d93025; }
.f-doc { fill: #1a73e8; }
.scroll { width: 10px; background: #e2e2e2; }
.scroll i { display: block; height: 84px; background: #ee8d68; }

/* Right side panel */
.panel { width: 56px; border-left: 1px solid #e9e9e9; display: flex; flex-direction: column; align-items: center; }
.p-cal { margin-top: 20px; }
.cal-num { font: 10px Roboto, sans-serif; fill: #fff; }
.p-keep { margin-top: 39px; }
.p-task { margin-top: 38px; }
.p-line { width: 20px; height: 1px; background: #d7d7d7; margin-top: 34px; }
.p-plus { margin-top: 38px; }
.p-next { fill: #5f6368; margin: 270px 2px 0 0; }
.dl { position: absolute; left: 1271px; top: 92px; width: 22px; height: 22px; background: linear-gradient(#49699e, #263f80); box-shadow: 0 0 15px #0005; }

/* Compose window */
.compose { position: absolute; left: 785px; top: 135px; width: 510px; height: 471px; background: #fff; border-radius: 8px 8px 0 0; box-shadow: 0 2px 10px #0007; }
.compose header { height: 40px; background: #404040; border-radius: 8px 8px 0 0; color: #fff; display: flex; align-items: center; padding-left: 16px; font: 500 14px/40px Roboto, sans-serif; letter-spacing: .2px; }
.compose header span { width: 421px; }
.min { width: 10px; height: 2px; background: #b6b6b6; margin-top: 9px; }
.c-exp { fill: #b6b6b6; margin: 2px 0 0 13px; }
.c-x { stroke: #b6b6b6; stroke-width: 2; margin: 2px 0 0 13px; }
.to { margin: 0 16px; height: 36px; border-bottom: 1px solid #ececec; display: flex; align-items: center; color: #777; font-size: 14px; }
.recip { height: 20px; width: 269px; margin-left: 4px; padding-left: 8px; border: 1px solid #d0d3d6; border-radius: 10px; background: #fafafa; font: 500 12px/18px Roboto, sans-serif; color: #5f6368; display: flex; align-items: center; letter-spacing: .33px; }
.recip svg { fill: #666; margin-left: 3px; }
.cursor { width: 1px; height: 16px; background: #000; margin-left: 5px; }
.cc { margin-left: auto; padding-right: 5px; letter-spacing: .2px; }
.subject { margin: 0 16px; height: 36px; border-bottom: 1px solid #ececec; color: #808080; font-size: 14px; line-height: 36px; letter-spacing: .1px; }
.text { margin: 49px 16px 0; height: 213px; font: 13px/19.500px "Liberation Sans", sans-serif; color: #222; }
.text u { text-decoration: underline wavy #e22 1px; text-underline-offset: 1px; text-decoration-skip-ink: none; }
.compose footer { margin: 49px 16px 0; display: flex; align-items: center; fill: #727272; height: 36px; }
.send { width: 97px; height: 36px; flex: none; background: #1a73e8; border-radius: 4px; color: #fff; display: flex; align-items: center; fill: #fff; font: 500 14px/36px Roboto, sans-serif; letter-spacing: .4px; }
.send span { width: 73px; text-align: center; border-right: 1px solid #1659bd; }
.send svg { margin-left: 2px; }
.tools { display: flex; flex: none; gap: 12px; margin: -2px 0 0 12px; }
.tools > svg { width: 20px; height: 20px; }
.f-more { margin: -2px 0 0 77px; }
.f-trash { margin: -2px 0 0 7px; }

/* Contact hover card */
.card { position: absolute; left: 914px; top: 217px; width: 340px; height: 128px; background: #fff; border-radius: 4px; box-shadow: 0 2px 10px #0006; }
.who { height: 81px; border-bottom: 1px solid #dadce0; display: flex; padding: 18px 0 0 22px; }
.face { width: 48px; height: 48px; border-radius: 50%; background: #c2185b; color: #fff; font-size: 25px; line-height: 44px; text-align: center; margin-right: 22px; }
.who h3 { margin: 4px 0 0; font: 19px/24px Roboto, sans-serif; letter-spacing: -.5px; white-space: nowrap; }
.who p { margin: 2px 0 0; font-size: 13px; line-height: 17px; color: #3c4043; white-space: nowrap; }
.acts { height: 47px; display: flex; align-items: center; gap: 16px; padding-left: 23px; color: #1a73e8; font-weight: 500; font-size: 14px; }
.acts span { width: 139px; letter-spacing: .3px; padding-top: 1px; }
.acts svg { width: 24px; height: 24px; margin-top: -4px; }

/* Dock */
.dock { height: 64px; flex: none; background: linear-gradient(#1c2947, #263659 10px, #263659); border-top: 1px solid #5b606b; position: relative; }
.wall { position: absolute; left: 0; top: 0; }
.inter { font: 12px "Liberation Sans", sans-serif; fill: #36568a; stroke: none; }
.apps { display: flex; gap: 7px; padding: 5px 6px; position: relative; }
.app-i { width: 52px; height: 52px; flex: none; border-radius: 4px; background: linear-gradient(#46567a, #293a60 50%, #344568); box-shadow: inset 0 0 0 1px #61708f; position: relative; }
.app-i svg { width: 52px; height: 52px; }
.ub { background: linear-gradient(135deg, #394a80, #526bae); }
.ff { background: #a55b48; }
.ch { background: #a79541; }
.te { background: #b0b0b5; }
.fi { background: #813a48; }
.sl { background: #aeb0a7; }
.su { background: #444447; box-shadow: inset 0 0 0 2px #b37d3a; }
.bin { margin-left: auto; }
.run::after { content: ""; position: absolute; left: 23px; bottom: -7px; border: 3px solid transparent; border-top: 0; border-bottom: 5px solid #ddd; }
.ff::before { content: ""; position: absolute; left: 23px; top: -6px; border: 3px solid transparent; border-bottom: 0; border-top: 5px solid #ddd; }
```
